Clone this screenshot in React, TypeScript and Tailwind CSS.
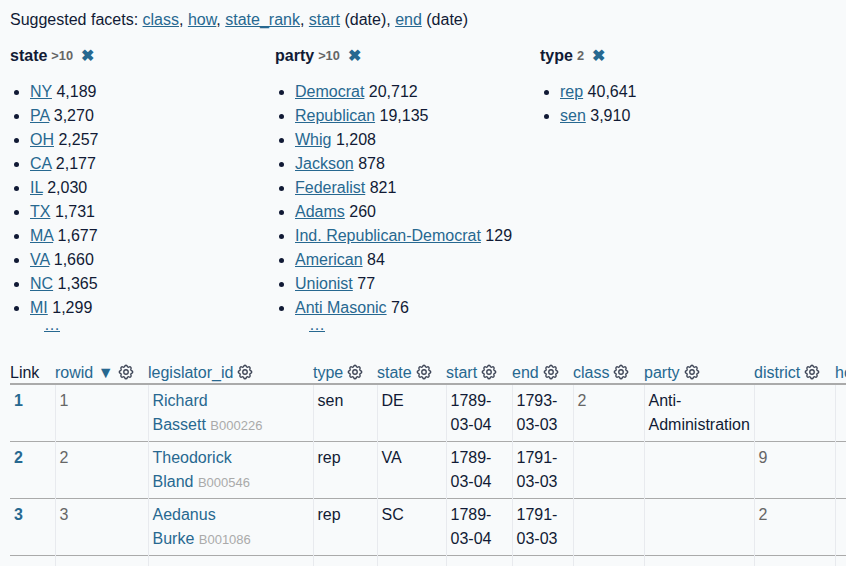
const linkClass = "text-[#276890] underline";

const facets = [
  {
    name: "state",
    count: ">10",
    more: true,
    items: [
      ["NY", "4,189"],
      ["PA", "3,270"],
      ["OH", "2,257"],
      ["CA", "2,177"],
      ["IL", "2,030"],
      ["TX", "1,731"],
      ["MA", "1,677"],
      ["VA", "1,660"],
      ["NC", "1,365"],
      ["MI", "1,299"],
    ],
  },
  {
    name: "party",
    count: ">10",
    more: true,
    items: [
      ["Democrat", "20,712"],
      ["Republican", "19,135"],
      ["Whig", "1,208"],
      ["Jackson", "878"],
      ["Federalist", "821"],
      ["Adams", "260"],
      ["Ind. Republican-Democrat", "129"],
      ["American", "84"],
      ["Unionist", "77"],
      ["Anti Masonic", "76"],
    ],
  },
  {
    name: "type",
    count: "2",
    more: false,
    items: [
      ["rep", "40,641"],
      ["sen", "3,910"],
    ],
  },
];

const columns = [
  { label: "rowid", width: "w-[93px]", sorted: true },
  { label: "legislator_id", width: "w-[165px]" },
  { label: "type", width: "w-[64px]" },
  { label: "state", width: "w-[69px]" },
  { label: "start", width: "w-[66px]" },
  { label: "end", width: "w-[61px]" },
  { label: "class", width: "w-[71px]" },
  { label: "party", width: "w-[110px]" },
  { label: "district", width: "w-[81px]" },
  { label: "home", width: "w-[80px]" },
];

const rows = [
  { id: "1", first: "Richard", last: "Bassett", code: "B000226", type: "sen", state: "DE", start: "1789-03-04", end: "1793-03-03", cls: "2", party: "Anti-Administration", district: "" },
  { id: "2", first: "Theodorick", last: "Bland", code: "B000546", type: "rep", state: "VA", start: "1789-03-04", end: "1791-03-03", cls: "", party: "", district: "9" },
  { id: "3", first: "Aedanus", last: "Burke", code: "B001086", type: "rep", state: "SC", start: "1789-03-04", end: "1791-03-03", cls: "", party: "", district: "2" },
];

function Cog() {
  return (
    <svg
      viewBox="0 0 24 24"
      fill="none"
      stroke="currentColor"
      strokeWidth="1.8"
      strokeLinecap="round"
      strokeLinejoin="round"
      className="ml-[3px] inline-block h-[18px] w-[18px] align-[-3px] text-[#3f4657]"
      aria-hidden
    >
      <path d="M10.325 4.317c.426-1.756 2.924-1.756 3.35 0a1.724 1.724 0 002.573 1.066c1.543-.94 3.31.826 2.37 2.37a1.724 1.724 0 001.065 2.572c1.756.426 1.756 2.924 0 3.35a1.724 1.724 0 00-1.066 2.573c.94 1.543-.826 3.31-2.37 2.37a1.724 1.724 0 00-2.572 1.065c-.426 1.756-2.924 1.756-3.35 0a1.724 1.724 0 00-2.573-1.066c-1.543.94-3.31-.826-2.37-2.37a1.724 1.724 0 00-1.065-2.572c-1.756-.426-1.756-2.924 0-3.35a1.724 1.724 0 001.066-2.573c-.94-1.543.826-3.31 2.37-2.37.996.608 2.296.07 2.572-1.065z" />
      <circle cx="12" cy="12" r="3" />
    </svg>
  );
}

function Facet({ facet }: { facet: (typeof facets)[number] }) {
  return (
    <div className="w-[265px] shrink-0">
      <p className="flex h-6 items-center font-bold">
        {facet.name}
        <span className="ml-[4px] text-[12.8px] font-bold text-[#666]">{facet.count}</span>
        <span className="ml-[8px] text-[16px] leading-6 text-[#276890]">✖</span>
      </p>
      <ul className="mt-[11px] list-disc pl-[20px] pt-[1px] marker:text-[#111a35]">
        {facet.items.map(([label, count]) => (
          <li key={label}>
            <a className={linkClass}>{label}</a> {count}
          </li>
        ))}
      </ul>
      {facet.more && (
        <p className="-mt-[7px] pl-[34px] leading-6">
          <a className={linkClass}>…</a>
        </p>
      )}
    </div>
  );
}

function Cell({ children, muted }: { children?: React.ReactNode; muted?: boolean }) {
  return (
    <td className={`border-l border-[#e8eaee] p-[4px] align-top ${muted ? "text-[#666]" : ""}`}>
      {children}
    </td>
  );
}

export default function App() {
  return (
    <div className="h-[566px] w-[846px] overflow-hidden bg-[#f8fafb] pl-[10px] pt-[8px] font-['Liberation_Sans',Arial,sans-serif] text-[16px] leading-6 text-[#111a35]">
      <p>
        Suggested facets: <a className={linkClass}>class</a>, <a className={linkClass}>how</a>,{" "}
        <a className={linkClass}>state_rank</a>, <a className={linkClass}>start</a> (date),{" "}
        <a className={linkClass}>end</a> (date)
      </p>

      <div className="mt-[12px] flex">
        {facets.map((f) => (
          <Facet key={f.name} facet={f} />
        ))}
      </div>

      <table className="mt-[26px] w-[905px] table-fixed border-collapse">
        <thead>
          <tr className="border-b-2 border-[#aaa]">
            <th className="h-[21px] w-[45px] align-top text-left leading-5 font-normal">Link</th>
            {columns.map((c) => (
              <th key={c.label} className={`${c.width} h-[21px] align-top text-left leading-5 font-normal whitespace-nowrap`}>
                <span className="text-[#276890]">
                  {c.label}
                  {c.sorted ? " ▼" : ""}
                </span>
                <Cog />
              </th>
            ))}
          </tr>
        </thead>
        <tbody>
          {rows.map((r) => (
            <tr key={r.id} className="border-b border-[#aaa]">
              <td className="p-[4px] align-top font-bold text-[#276890]">{r.id}</td>
              <Cell muted>{r.id}</Cell>
              <Cell>
                <span className="text-[#276890]">{r.first}</span>
                <br />
                <span className="text-[#276890]">{r.last}</span>{" "}
                <span className="text-[13px] leading-none text-[#aaa]">{r.code}</span>
              </Cell>
              <Cell>{r.type}</Cell>
              <Cell>{r.state}</Cell>
              <Cell>{r.start}</Cell>
              <Cell>{r.end}</Cell>
              <Cell muted>{r.cls}</Cell>
              <Cell>{r.party}</Cell>
              <Cell muted>{r.district}</Cell>
              <Cell />
            </tr>
          ))}
          <tr>
            <td className="h-[20px]" />
            {columns.map((c) => (
              <td key={c.label} className="border-l border-[#e8eaee]" />
            ))}
          </tr>
        </tbody>
      </table>
    </div>
  );
}
